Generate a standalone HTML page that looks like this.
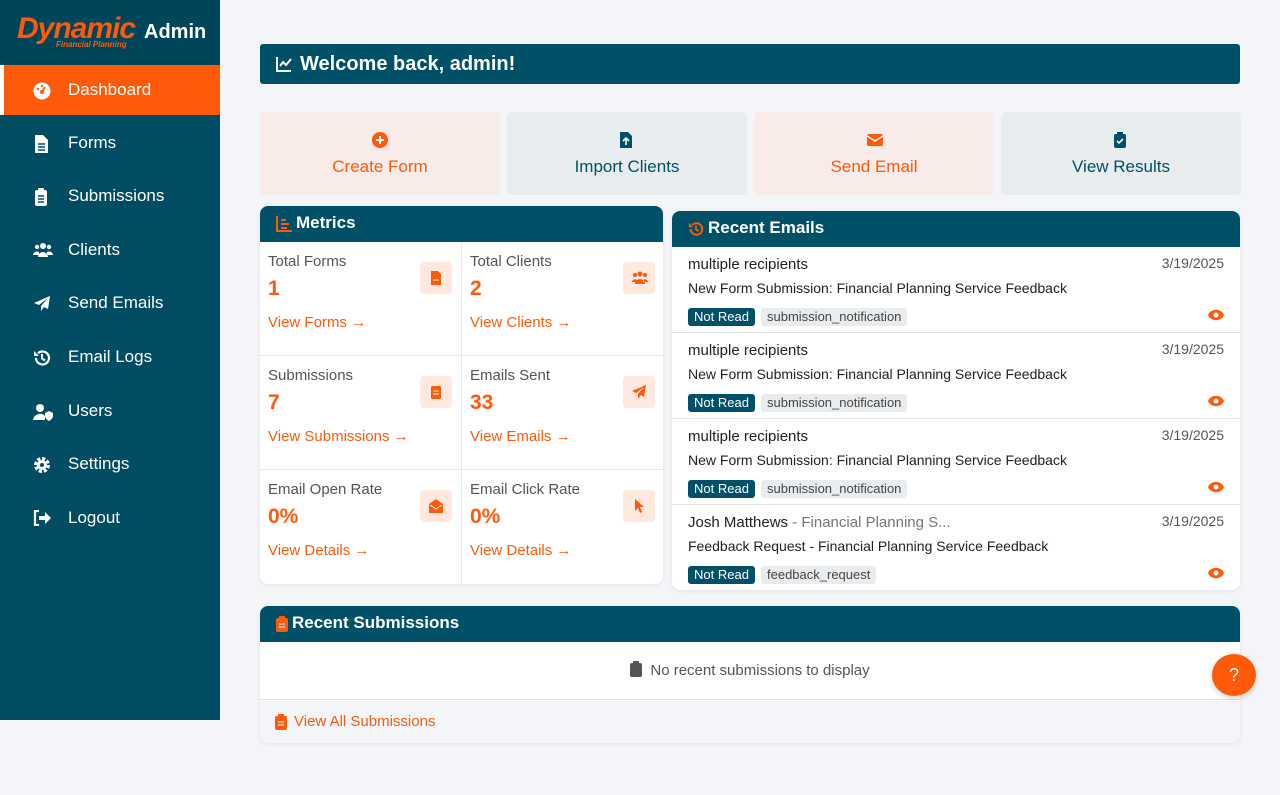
<!DOCTYPE html>
<html><head><meta charset="utf-8"><style>
*{box-sizing:border-box;margin:0;padding:0}
body{width:1280px;height:795px;background:#f4f5f9;font-family:"Liberation Sans",sans-serif;position:relative;overflow:hidden;color:#222}
.sb{position:absolute;left:0;top:0;width:220px;height:720px;background:#004d63}
.logo{position:absolute;left:0;top:0;width:220px;height:65px;background:#00465a}
.logo .d{position:absolute;left:17px;top:12px;color:#ff5a0a;font:italic bold 30px "Liberation Sans",sans-serif;letter-spacing:-1px}
.logo .fp{position:absolute;left:56px;top:40px;color:#ff5a0a;font:italic bold 8px "Liberation Sans",sans-serif}
.logo .ad{position:absolute;left:144px;top:21px;color:#fff;font:bold 20px "Liberation Sans",sans-serif}
.nav{position:absolute;left:0;width:220px;height:50px;color:#fff;font-size:17px;line-height:50px;padding-left:68px}
.nav.act{background:#ff5a0a;border-left:4px solid #fff;padding-left:64px}
.nav svg{position:absolute;left:33px;top:17px}
.nav.act svg{left:29px}
.wel{position:absolute;left:260px;top:44px;width:980px;height:40px;background:#005068;border-radius:3px;color:#fff;font-weight:bold;font-size:20px;line-height:40px;padding-left:40px}
.wel svg{position:absolute;left:16px;top:12px}
.act-c{position:absolute;top:112px;width:240px;height:83px;border-radius:5px;text-align:center;font-size:17px}
.act-c svg{position:absolute;left:112px;top:20px}
.act-c span{position:absolute;left:0;right:0;top:45px}
.card{position:absolute;background:#fff;border-radius:8px;overflow:hidden;box-shadow:0 1px 4px rgba(0,0,0,.08)}
.ch{height:36px;background:#005068;color:#fff;font-weight:bold;font-size:17px;line-height:34px;padding-left:36px;position:relative}
.ch svg{position:absolute;left:16px;top:10px}
.cell{position:absolute;width:202px;height:114px;border-right:1px solid #e8e8e8;border-bottom:1px solid #e8e8e8}
.cell .l{position:absolute;left:8px;top:11px;font-size:15px;color:#555}
.cell .v{position:absolute;left:8px;top:35px;font-size:21px;font-weight:bold;color:#ff5a0a}
.cell .k{position:absolute;left:8px;top:72px;font-size:15px;color:#ff5a0a}
.cell .ic{position:absolute;right:9px;top:20px;width:32px;height:32px;border-radius:4px;background:#ffe9df}
.cell .ic svg{position:absolute;left:9px;top:9px}
.em{position:absolute;left:0;width:568px;height:86px;border-bottom:1px solid #e2e2e2}
.em .n{position:absolute;left:16px;top:9px;font-size:15px;color:#222}
.em .n i{font-style:normal;color:#777}
.em .dt{position:absolute;right:16px;top:8px;font-size:14px;color:#555}
.em .s{position:absolute;left:16px;top:33px;font-size:14px;color:#222}
.em .b1{position:absolute;left:16px;top:61px;background:#005068;color:#fff;font-size:13px;padding:1px 6px;border-radius:3px;height:18px;line-height:16px}
.em .b2{position:absolute;top:61px;background:#e9ecef;color:#444;font-size:13px;padding:1px 6px;border-radius:3px;height:18px;line-height:16px}
.em svg{position:absolute;right:16px;top:62px}
</style></head><body>
<div class="sb">
<div class="logo"><div class="d">Dynamic</div><div class="fp">Financial Planning</div><div class="ad">Admin</div></div>
<div class="nav act" style="top:65px"><svg width="18" height="18" viewBox="0 0 18 18"><circle cx="9" cy="9" r="8.5" fill="#fff"/><circle cx="9" cy="10" r="2" fill="#ff5a0a"/><path d="M9 10L12 5" stroke="#ff5a0a" stroke-width="2"/><circle cx="5" cy="7" r="1.2" fill="#ff5a0a"/><circle cx="9" cy="4" r="1.2" fill="#ff5a0a"/></svg>Dashboard</div>
<div class="nav" style="top:118px"><svg width="16" height="18" viewBox="0 0 16 18"><path d="M2 0h8l5 5v13H2z" fill="#fff"/><path d="M5 9h7M5 12h7M5 15h7" stroke="#004d63" stroke-width="1.5"/></svg>Forms</div>
<div class="nav" style="top:171px"><svg width="16" height="18" viewBox="0 0 16 18"><rect x="2" y="2" width="12" height="16" rx="2" fill="#fff"/><rect x="5" y="0" width="6" height="4" rx="1" fill="#fff"/><path d="M5 8h6M5 11h6M5 14h6" stroke="#004d63" stroke-width="1.5"/></svg>Submissions</div>
<div class="nav" style="top:225px"><svg width="20" height="16" viewBox="0 0 20 16"><circle cx="10" cy="4" r="3" fill="#fff"/><circle cx="4" cy="5" r="2.2" fill="#fff"/><circle cx="16" cy="5" r="2.2" fill="#fff"/><path d="M5 15a5 5 0 0110 0zM0 13a4 4 0 016-3v3zM20 13a4 4 0 00-6-3v3z" fill="#fff"/></svg>Clients</div>
<div class="nav" style="top:278px"><svg width="18" height="18" viewBox="0 0 18 18"><path d="M17 1L1 8l5 2 9-7-7 8v5l3-4 4 2z" fill="#fff"/></svg>Send Emails</div>
<div class="nav" style="top:332px"><svg width="18" height="18" viewBox="0 0 18 18"><path d="M3 9a6.5 6.5 0 101.9-4.6" stroke="#fff" stroke-width="2.2" fill="none"/><path d="M1 2v5h5z" fill="#fff"/><path d="M9 5v4.5l3 2" stroke="#fff" stroke-width="2" fill="none"/></svg>Email Logs</div>
<div class="nav" style="top:386px"><svg width="20" height="18" viewBox="0 0 20 18"><circle cx="7" cy="5" r="4" fill="#fff"/><path d="M0 17a7 7 0 0112-4v4z" fill="#fff"/><path d="M12 10l4-2 4 2v3c0 3-4 5-4 5s-4-2-4-5z" fill="#fff"/></svg>Users</div>
<div class="nav" style="top:439px"><svg width="18" height="18" viewBox="0 0 18 18"><circle cx="9" cy="9" r="6" fill="none" stroke="#fff" stroke-width="4" stroke-dasharray="3 1.7"/><circle cx="9" cy="9" r="5" fill="#fff"/><circle cx="9" cy="9" r="2" fill="#004d63"/></svg>Settings</div>
<div class="nav" style="top:493px"><svg width="18" height="16" viewBox="0 0 18 16"><path d="M6 1H2v14h4" stroke="#fff" stroke-width="2.2" fill="none"/><path d="M6 6h6V2l6 6-6 6v-4H6z" fill="#fff"/></svg>Logout</div>
</div>

<div class="wel"><svg width="16" height="16" viewBox="0 0 16 16"><path d="M1 1v14h14" stroke="#fff" stroke-width="2" fill="none"/><path d="M4 10l3-4 3 3 5-6" stroke="#fff" stroke-width="2" fill="none"/></svg>Welcome back, admin!</div>

<div class="act-c" style="left:260px;background:#f8ebe8;color:#ff5a0a"><svg width="16" height="16" viewBox="0 0 16 16"><circle cx="8" cy="8" r="8" fill="#ff5a0a"/><path d="M8 4v8M4 8h8" stroke="#fff" stroke-width="2"/></svg><span>Create Form</span></div>
<div class="act-c" style="left:507px;background:#e7ecef;color:#005068"><svg width="14" height="16" viewBox="0 0 14 16"><path d="M1 0h8l4 4v12H1z" fill="#005068"/><path d="M7 13V7M4 9l3-3 3 3" stroke="#fff" stroke-width="1.6" fill="none"/></svg><span>Import Clients</span></div>
<div class="act-c" style="left:754px;background:#f8ebe8;color:#ff5a0a"><svg width="18" height="16" viewBox="0 0 18 16"><rect x="1" y="2" width="16" height="12" rx="2" fill="#ff5a0a"/><path d="M1 4l8 5 8-5" stroke="#fff" stroke-width="1.5" fill="none"/></svg><span>Send Email</span></div>
<div class="act-c" style="left:1001px;background:#e7ecef;color:#005068"><svg width="14" height="16" viewBox="0 0 14 16"><rect x="1" y="2" width="12" height="14" rx="2" fill="#005068"/><rect x="4" y="0" width="6" height="3" fill="#005068"/><path d="M4 9l2 2 4-4" stroke="#fff" stroke-width="1.6" fill="none"/></svg><span>View Results</span></div>

<div class="card" style="left:260px;top:206px;width:403px;height:378px">
<div class="ch"><svg width="16" height="16" viewBox="0 0 16 16"><path d="M1 0v15h15" stroke="#ff5a0a" stroke-width="2" fill="none"/><path d="M5 4h5M5 8h8M5 12h6" stroke="#ff5a0a" stroke-width="2"/></svg>Metrics</div>
<div class="cell" style="left:0;top:36px"><div class="l">Total Forms</div><div class="v">1</div><div class="k">View Forms →</div><div class="ic"><svg width="14" height="14" viewBox="0 0 14 14"><path d="M2 0h7l3 3v11H2z" fill="#ff5a0a"/><path d="M4 9h6" stroke="#fff"/></svg></div></div>
<div class="cell" style="left:202px;top:36px;border-right:0"><div class="l">Total Clients</div><div class="v">2</div><div class="k">View Clients →</div><div class="ic"><svg width="16" height="14" viewBox="0 0 16 14"><circle cx="8" cy="3" r="2.5" fill="#ff5a0a"/><circle cx="3" cy="4" r="2" fill="#ff5a0a"/><circle cx="13" cy="4" r="2" fill="#ff5a0a"/><path d="M3 13a5 5 0 0110 0zM0 11a3 3 0 015-2v2zM16 11a3 3 0 00-5-2v2z" fill="#ff5a0a"/></svg></div></div>
<div class="cell" style="left:0;top:150px"><div class="l">Submissions</div><div class="v">7</div><div class="k">View Submissions →</div><div class="ic"><svg width="14" height="14" viewBox="0 0 14 14"><rect x="2" y="1" width="10" height="13" rx="1.5" fill="#ff5a0a"/><path d="M4 6h6M4 9h6" stroke="#fff"/></svg></div></div>
<div class="cell" style="left:202px;top:150px;border-right:0"><div class="l">Emails Sent</div><div class="v">33</div><div class="k">View Emails →</div><div class="ic"><svg width="14" height="14" viewBox="0 0 14 14"><path d="M14 0L0 6l4 2 8-6-6 7v5l3-4 3 2z" fill="#ff5a0a"/></svg></div></div>
<div class="cell" style="left:0;top:264px;border-bottom:0"><div class="l">Email Open Rate</div><div class="v">0%</div><div class="k">View Details →</div><div class="ic"><svg width="14" height="14" viewBox="0 0 14 14"><path d="M0 5l7-5 7 5v9H0z" fill="#ff5a0a"/><path d="M1 6l6 4 6-4" stroke="#fff" fill="none"/></svg></div></div>
<div class="cell" style="left:202px;top:264px;border-right:0;border-bottom:0"><div class="l">Email Click Rate</div><div class="v">0%</div><div class="k">View Details →</div><div class="ic"><svg width="14" height="14" viewBox="0 0 14 14"><path d="M3 0v12l3-3 2 5 2-1-2-5h4z" fill="#ff5a0a"/></svg></div></div>
</div>

<div class="card" style="left:672px;top:211px;width:568px;height:379px">
<div class="ch"><svg width="16" height="16" viewBox="0 0 18 18"><path d="M3 9a6.5 6.5 0 101.9-4.6" stroke="#ff5a0a" stroke-width="2.2" fill="none"/><path d="M1 2v5h5z" fill="#ff5a0a"/><path d="M9 5v4.5l3 2" stroke="#ff5a0a" stroke-width="2" fill="none"/></svg>Recent Emails</div>
<div class="em" style="top:36px"><div class="n">multiple recipients</div><div class="dt">3/19/2025</div><div class="s">New Form Submission: Financial Planning Service Feedback</div><div class="b1">Not Read</div><div class="b2" style="left:89px">submission_notification</div><svg width="16" height="12" viewBox="0 0 16 12"><path d="M0 6c3-7 13-7 16 0-3 7-13 7-16 0z" fill="#ff5a0a"/><circle cx="8" cy="6" r="2.5" fill="#fff"/></svg></div>
<div class="em" style="top:122px"><div class="n">multiple recipients</div><div class="dt">3/19/2025</div><div class="s">New Form Submission: Financial Planning Service Feedback</div><div class="b1">Not Read</div><div class="b2" style="left:89px">submission_notification</div><svg width="16" height="12" viewBox="0 0 16 12"><path d="M0 6c3-7 13-7 16 0-3 7-13 7-16 0z" fill="#ff5a0a"/><circle cx="8" cy="6" r="2.5" fill="#fff"/></svg></div>
<div class="em" style="top:208px"><div class="n">multiple recipients</div><div class="dt">3/19/2025</div><div class="s">New Form Submission: Financial Planning Service Feedback</div><div class="b1">Not Read</div><div class="b2" style="left:89px">submission_notification</div><svg width="16" height="12" viewBox="0 0 16 12"><path d="M0 6c3-7 13-7 16 0-3 7-13 7-16 0z" fill="#ff5a0a"/><circle cx="8" cy="6" r="2.5" fill="#fff"/></svg></div>
<div class="em" style="top:294px;border-bottom:0"><div class="n">Josh Matthews <i>- Financial Planning S...</i></div><div class="dt">3/19/2025</div><div class="s">Feedback Request - Financial Planning Service Feedback</div><div class="b1">Not Read</div><div class="b2" style="left:89px">feedback_request</div><svg width="16" height="12" viewBox="0 0 16 12"><path d="M0 6c3-7 13-7 16 0-3 7-13 7-16 0z" fill="#ff5a0a"/><circle cx="8" cy="6" r="2.5" fill="#fff"/></svg></div>
</div>

<div class="card" style="left:260px;top:606px;width:980px;height:137px">
<div class="ch" style="padding-left:32px"><svg width="12" height="16" viewBox="0 0 12 16"><rect x="0" y="2" width="12" height="14" rx="2" fill="#ff5a0a"/><rect x="3" y="0" width="6" height="3" fill="#ff5a0a"/><path d="M3 8h6M3 11h6" stroke="#fff"/></svg>Recent Submissions</div>
<div style="position:absolute;top:36px;left:0;right:0;height:58px;border-bottom:1px solid #e2e2e2;text-align:center;line-height:58px;font-size:15px;color:#555"><svg width="12" height="16" viewBox="0 0 12 16" style="vertical-align:-2px;margin-right:8px"><rect x="0" y="2" width="12" height="14" rx="2" fill="#555"/><rect x="3" y="0" width="6" height="3" fill="#555"/></svg>No recent submissions to display</div>
<div style="position:absolute;top:95px;left:0;right:0;bottom:0;background:#f3f5f8;padding-left:34px;line-height:42px;font-size:15px;color:#ff5a0a"><svg width="12" height="16" viewBox="0 0 12 16" style="position:absolute;left:15px;top:13px"><rect x="0" y="2" width="12" height="14" rx="2" fill="#ff5a0a"/><rect x="3" y="0" width="6" height="3" fill="#ff5a0a"/><path d="M3 8h6M3 11h6" stroke="#fff"/></svg>View All Submissions</div>
</div>

<div style="position:absolute;left:1212px;top:654px;width:44px;height:42px;border-radius:50%;background:#ff5a0a;color:#fff;text-align:center;line-height:42px;font-size:18px;box-shadow:0 2px 6px rgba(0,0,0,.2)">?</div>
</body></html>
